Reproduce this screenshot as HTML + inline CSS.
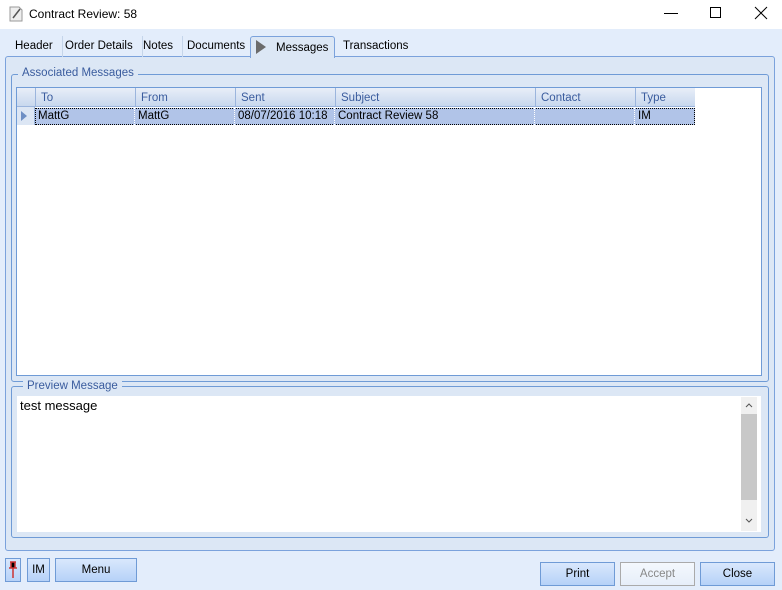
<!DOCTYPE html>
<html><head><style>
*{box-sizing:border-box;margin:0;padding:0}
body{width:782px;height:590px;background:#e3edfb;font-family:"Liberation Sans",sans-serif;font-size:11.5px;position:relative;overflow:hidden;color:#000}
.a{position:absolute}
.title{left:0;top:0;width:782px;height:29px;background:#fff}
.tab{top:36px;height:21px;line-height:20px;padding:0 9px;border-right:1px solid #c5d5ea}
.btn{height:24px;border:1px solid #6f9bd6;background:linear-gradient(#d9e8fc,#b6d2f8);text-align:center;line-height:22px}
.hd{top:88px;height:19px;line-height:20px;padding-left:5px;color:#3a5c9e;border-left:1px solid #9bb5dd}
.cl{top:108px;height:17px;line-height:16px;padding-left:3px;border-right:1px dotted #fff}
</style></head><body>
<div class="a title"></div>
<svg class="a" style="left:9px;top:6px" width="14" height="16"><path d="M1 1h9l3 3v11H1z" fill="#eee" stroke="#999"/><path d="M4 12l7-9" stroke="#555" stroke-width="1.5"/></svg>
<div class="a" style="left:29px;top:7px;font-size:12px">Contract Review: 58</div>
<div class="a" style="left:664px;top:13px;width:14px;height:1px;background:#000"></div>
<div class="a" style="left:710px;top:7px;width:11px;height:11px;border:1px solid #000"></div>
<svg class="a" style="left:754px;top:6px" width="14" height="14"><path d="M1 1l12 12M13 1L1 13" stroke="#000"/></svg>

<div class="a" style="left:5px;top:56px;width:770px;height:495px;border:1px solid #7ba2dc;border-radius:3px;background:#dce7f5"></div>
<div class="a tab" style="left:6px">Header</div>
<div class="a tab" style="left:56px">Order Details</div>
<div class="a tab" style="left:134px">Notes</div>
<div class="a tab" style="left:178px">Documents</div>
<div class="a" style="left:250px;top:36px;width:85px;height:22px;border:1px solid #7ba2dc;border-bottom:none;border-radius:3px 3px 0 0;background:#dce7f5"></div>
<svg class="a" style="left:255px;top:40px" width="12" height="14"><path d="M1 0l10 7-10 7z" fill="#6b6b6b"/></svg>
<div class="a" style="left:276px;top:38px;line-height:20px">Messages</div>
<div class="a tab" style="left:334px;border:none">Transactions</div>

<div class="a" style="left:11px;top:74px;width:758px;height:308px;border:1px solid #6f9bd6;border-radius:3px"></div>
<div class="a" style="left:18px;top:67px;background:#dce7f5;padding:0 4px;color:#3a5c9e">Associated Messages</div>
<div class="a" style="left:16px;top:87px;width:746px;height:289px;border:1px solid #6f9bd6;background:#fff"></div>
<div class="a" style="left:17px;top:88px;width:678px;height:19px;background:linear-gradient(#e8eef8,#c8d8ee);border-bottom:1px solid #9bb5dd"></div>
<div class="a" style="left:17px;top:107px;width:18px;height:18px;background:#dce6f4;border-right:1px solid #9bb5dd"></div>
<svg class="a" style="left:21px;top:111px" width="6" height="10"><path d="M0 0l6 5-6 5z" fill="#6e8fc4"/></svg>
<div class="a hd" style="left:35px;width:100px">To</div>
<div class="a hd" style="left:135px;width:100px">From</div>
<div class="a hd" style="left:235px;width:100px">Sent</div>
<div class="a hd" style="left:335px;width:200px">Subject</div>
<div class="a hd" style="left:535px;width:100px">Contact</div>
<div class="a hd" style="left:635px;width:60px">Type</div>
<div class="a" style="left:35px;top:108px;width:660px;height:17px;background:#b1c4e8;border:1px dotted #000"></div>
<div class="a cl" style="left:35px;width:100px">MattG</div>
<div class="a cl" style="left:135px;width:100px">MattG</div>
<div class="a cl" style="left:235px;width:100px">08/07/2016 10:18</div>
<div class="a cl" style="left:335px;width:200px">Contract Review 58</div>
<div class="a cl" style="left:535px;width:100px"></div>
<div class="a cl" style="left:635px;width:60px;border:none">IM</div>

<div class="a" style="left:11px;top:386px;width:758px;height:152px;border:1px solid #6f9bd6;border-radius:3px"></div>
<div class="a" style="left:23px;top:380px;background:#dce7f5;padding:0 4px;color:#3a5c9e">Preview Message</div>
<div class="a" style="left:17px;top:396px;width:744px;height:136px;background:#fff"></div>
<div class="a" style="left:20px;top:398px;font-size:13px">test message</div>
<div class="a" style="left:741px;top:397px;width:16px;height:134px;background:#f0f0f0"></div>
<div class="a" style="left:741px;top:414px;width:16px;height:86px;background:#c8c8c8"></div>
<svg class="a" style="left:745px;top:402px" width="8" height="6"><path d="M1 5l3-3 3 3" stroke="#555" fill="none"/></svg>
<svg class="a" style="left:745px;top:518px" width="8" height="6"><path d="M1 1l3 3 3-3" stroke="#555" fill="none"/></svg>

<div class="a btn" style="left:5px;top:558px;width:16px"></div>
<svg class="a" style="left:8px;top:561px" width="10" height="18"><path d="M2 1h6M3 1v6h4V1M1 7h8M5 7v10" stroke="#c33" stroke-width="1.5"/></svg>
<div class="a btn" style="left:27px;top:558px;width:23px">IM</div>
<div class="a btn" style="left:55px;top:558px;width:82px">Menu</div>
<div class="a btn" style="left:540px;top:562px;width:75px">Print</div>
<div class="a btn" style="left:620px;top:562px;width:75px;border-color:#aaa;background:linear-gradient(#f4f8fd,#e6eef9);color:#888">Accept</div>
<div class="a btn" style="left:700px;top:562px;width:75px">Close</div>
</body></html>
